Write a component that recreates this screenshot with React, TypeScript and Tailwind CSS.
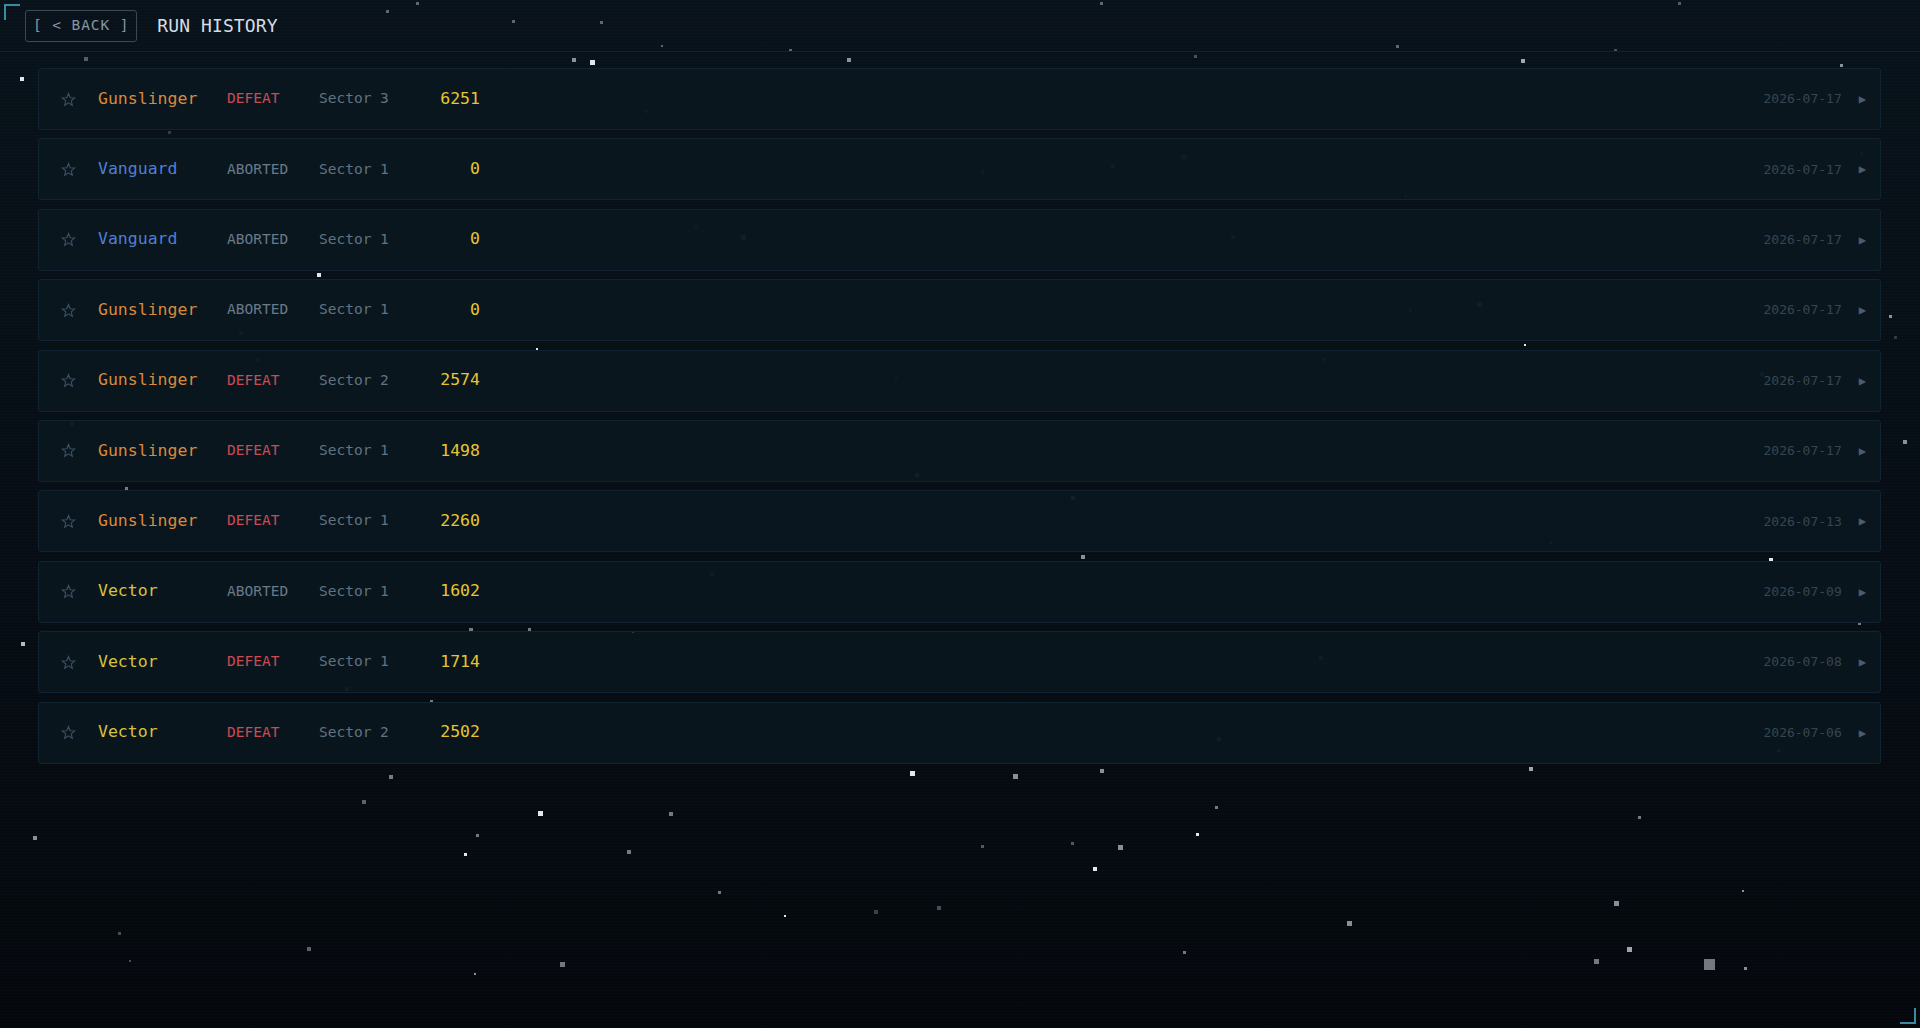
import React from "react";

type Run = {
  cls: "Gunslinger" | "Vanguard" | "Vector";
  result: "DEFEAT" | "ABORTED";
  sector: number;
  score: number;
  date: string;
};

const runs: Run[] = [
  { cls: "Gunslinger", result: "DEFEAT", sector: 3, score: 6251, date: "2026-07-17" },
  { cls: "Vanguard", result: "ABORTED", sector: 1, score: 0, date: "2026-07-17" },
  { cls: "Vanguard", result: "ABORTED", sector: 1, score: 0, date: "2026-07-17" },
  { cls: "Gunslinger", result: "ABORTED", sector: 1, score: 0, date: "2026-07-17" },
  { cls: "Gunslinger", result: "DEFEAT", sector: 2, score: 2574, date: "2026-07-17" },
  { cls: "Gunslinger", result: "DEFEAT", sector: 1, score: 1498, date: "2026-07-17" },
  { cls: "Gunslinger", result: "DEFEAT", sector: 1, score: 2260, date: "2026-07-13" },
  { cls: "Vector", result: "ABORTED", sector: 1, score: 1602, date: "2026-07-09" },
  { cls: "Vector", result: "DEFEAT", sector: 1, score: 1714, date: "2026-07-08" },
  { cls: "Vector", result: "DEFEAT", sector: 2, score: 2502, date: "2026-07-06" },
];

const classColor: Record<Run["cls"], string> = {
  Gunslinger: "text-[#d98a3c]",
  Vanguard: "text-[#4f7fd6]",
  Vector: "text-[#d6c23e]",
};

// [x, y, size, brightness 0..1]
const stars: [number, number, number, number][] = [
  [20, 77, 4, 1], [590, 60, 5, 1], [572, 58, 4, 0.6], [847, 58, 4, 0.6], [1521, 59, 4, 0.7],
  [1840, 64, 3, 0.6], [317, 273, 4, 1], [536, 348, 2, 1], [1524, 344, 2, 1], [1769, 558, 4, 1],
  [21, 642, 4, 0.8], [910, 771, 5, 1], [1013, 774, 5, 0.6], [1100, 769, 4, 0.6], [1529, 767, 4, 0.7],
  [538, 811, 5, 1], [669, 812, 4, 0.5], [362, 800, 4, 0.4], [389, 775, 4, 0.5], [33, 836, 4, 0.6],
  [464, 853, 3, 1], [476, 834, 3, 0.5], [627, 850, 4, 0.5], [1118, 845, 5, 0.6], [1093, 867, 4, 1],
  [1196, 833, 3, 1], [1215, 806, 3, 0.5], [1638, 816, 3, 0.5], [1614, 901, 5, 0.6], [1627, 947, 5, 0.7],
  [1704, 959, 11, 0.5], [1347, 921, 5, 0.6], [1744, 967, 3, 0.6], [1742, 890, 2, 0.6], [718, 891, 3, 0.5],
  [784, 915, 2, 1], [937, 906, 4, 0.3], [874, 910, 4, 0.25], [560, 962, 5, 0.5], [307, 947, 4, 0.4],
  [474, 973, 2, 0.6], [118, 932, 3, 0.3], [129, 960, 2, 0.3], [1183, 951, 3, 0.5], [1594, 959, 5, 0.5],
  [981, 845, 3, 0.35], [1071, 842, 3, 0.35], [1889, 315, 3, 0.6], [1903, 440, 4, 0.6], [125, 487, 3, 0.5],
  [1081, 555, 4, 0.6], [469, 628, 4, 0.5], [528, 628, 3, 0.5], [632, 631, 2, 1], [430, 700, 3, 0.5],
  [1858, 622, 3, 0.5], [416, 2, 3, 0.4], [386, 10, 3, 0.4], [512, 20, 3, 0.4], [600, 21, 3, 0.4],
  [1100, 2, 3, 0.4], [1678, 2, 3, 0.35], [661, 45, 2, 0.4], [789, 49, 3, 0.4], [1194, 55, 3, 0.3],
  [1396, 45, 3, 0.4], [1614, 49, 3, 0.3], [84, 57, 4, 0.35], [1182, 155, 4, 0.2], [1111, 164, 4, 0.2],
  [981, 170, 3, 0.2], [741, 235, 5, 0.25], [694, 225, 4, 0.15], [1231, 235, 4, 0.2], [1477, 302, 5, 0.25],
  [239, 331, 4, 0.2], [255, 358, 4, 0.15], [1322, 358, 3, 0.2], [915, 473, 4, 0.25], [1071, 496, 4, 0.3],
  [710, 572, 4, 0.2], [1319, 656, 4, 0.2], [1217, 737, 4, 0.25], [345, 687, 4, 0.2], [70, 422, 4, 0.2],
  [1760, 372, 4, 0.2], [1777, 749, 3, 0.25], [168, 131, 3, 0.2], [645, 110, 3, 0.15], [1894, 336, 3, 0.2],
  [1404, 194, 3, 0.15], [895, 377, 3, 0.15], [1549, 541, 3, 0.2], [1409, 309, 3, 0.15], [1860, 152, 3, 0.15],
];

function Starfield() {
  return (
    <div className="pointer-events-none absolute inset-0 overflow-hidden">
      {stars.map(([x, y, s, b], i) => (
        <span
          key={i}
          className="absolute bg-[#dfe8ee]"
          style={{ left: x, top: y, width: s, height: s, opacity: b }}
        />
      ))}
    </div>
  );
}

function StarOutline() {
  return (
    <svg width="15" height="15" viewBox="0 0 24 24" fill="none" stroke="#3b5063" strokeWidth="1.8" strokeLinejoin="miter">
      <path d="M12 2.5l2.7 6.6 7.1.5-5.4 4.6 1.7 6.9L12 17.3l-6.1 3.8 1.7-6.9-5.4-4.6 7.1-.5z" />
    </svg>
  );
}

function RunRow({ run }: { run: Run }) {
  const defeat = run.result === "DEFEAT";
  return (
    <div className="flex h-[62px] items-center rounded-[3px] border border-[#112330] bg-[#0a1720]/85 pl-[21px] pr-[14px]">
      <span className="flex w-[16px] justify-center">
        <StarOutline />
      </span>
      <span className={`ml-[22px] w-[129px] text-[16.5px] ${classColor[run.cls]}`}>{run.cls}</span>
      <span className={`w-[92px] text-[14.5px] ${defeat ? "text-[#cc4a52]" : "text-[#68798a]"}`}>
        {run.result}
      </span>
      <span className="w-[90px] text-[14.5px] text-[#617280]">Sector {run.sector}</span>
      <span className="w-[71px] text-right text-[16.5px] text-[#e6c530]">{run.score}</span>
      <span className="flex-1" />
      <span className="text-[13px] text-[#36464f]">{run.date}</span>
      <span className="ml-[17px] text-[12px] leading-none text-[#4c5d6a]">▶</span>
    </div>
  );
}

export default function App() {
  return (
    <div className="relative h-[1028px] w-full overflow-hidden bg-[linear-gradient(180deg,#08121a_0%,#060d14_55%,#04080d_100%)] font-['DejaVu_Sans_Mono',monospace]">
      <Starfield />
      {/* scanlines */}
      <div className="pointer-events-none absolute inset-0 bg-[repeating-linear-gradient(180deg,rgba(255,255,255,0.012)_0px,rgba(255,255,255,0.012)_1px,transparent_1px,transparent_3px)]" />

      {/* corner brackets */}
      <span className="absolute left-[4px] top-[4px] h-[16px] w-[16px] border-l-2 border-t-2 border-[#3b8aa3]" />
      <span className="absolute bottom-[4px] right-[4px] h-[16px] w-[16px] border-b-2 border-r-2 border-[#3b8aa3]" />

      <div className="relative">
        <header className="flex h-[52px] items-center border-b border-[#122430] pl-[25px]">
          <button className="flex h-[32px] items-center rounded-[3px] border border-[#3a4a55] px-[7px] text-[14.5px] tracking-[0.9px] text-[#8796a2]">
            [ &lt; BACK ]
          </button>
          <h1 className="ml-[20px] text-[18px] tracking-[0.1px] text-[#d4dde4]">RUN HISTORY</h1>
        </header>

        <div className="flex flex-col gap-[8.4px] pl-[38px] pr-[39px] pt-[16px]">
          {runs.map((r, i) => (
            <RunRow key={i} run={r} />
          ))}
        </div>
      </div>
    </div>
  );
}
